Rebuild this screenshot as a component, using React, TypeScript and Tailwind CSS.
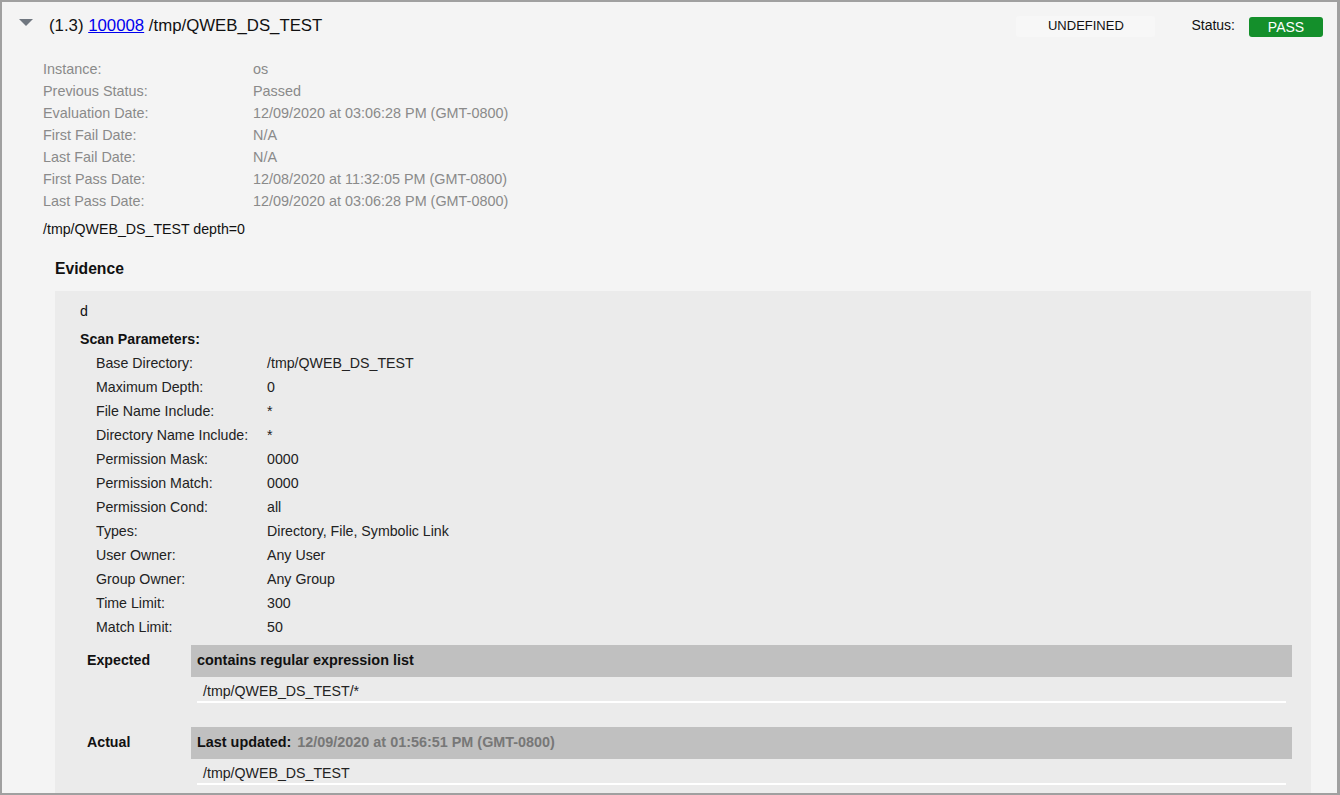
import React from "react";

const META: [string, string][] = [
  ["Instance:", "os"],
  ["Previous Status:", "Passed"],
  ["Evaluation Date:", "12/09/2020 at 03:06:28 PM (GMT-0800)"],
  ["First Fail Date:", "N/A"],
  ["Last Fail Date:", "N/A"],
  ["First Pass Date:", "12/08/2020 at 11:32:05 PM (GMT-0800)"],
  ["Last Pass Date:", "12/09/2020 at 03:06:28 PM (GMT-0800)"],
];

const PARAMS: [string, string][] = [
  ["Base Directory:", "/tmp/QWEB_DS_TEST"],
  ["Maximum Depth:", "0"],
  ["File Name Include:", "*"],
  ["Directory Name Include:", "*"],
  ["Permission Mask:", "0000"],
  ["Permission Match:", "0000"],
  ["Permission Cond:", "all"],
  ["Types:", "Directory, File, Symbolic Link"],
  ["User Owner:", "Any User"],
  ["Group Owner:", "Any Group"],
  ["Time Limit:", "300"],
  ["Match Limit:", "50"],
];

function ResultRow({
  label,
  header,
  value,
}: {
  label: string;
  header: React.ReactNode;
  value: string;
}) {
  return (
    <div className="flex">
      <div className="flex h-[32px] w-[136px] shrink-0 items-center pl-[32px] text-[14.2px] font-bold text-[#111]">
        {label}
      </div>
      <div className="mr-[19px] flex-1">
        <div className="flex h-[32px] items-center bg-[#c0c0c0] px-[6px] text-[14.4px] font-bold text-[#111]">
          {header}
        </div>
        <div className="mx-[6px] border-b-2 border-white pt-[4px] pl-[6px] text-[14.2px] leading-[20px] text-[#222]">
          {value}
        </div>
      </div>
    </div>
  );
}

export default function App() {
  return (
    <div className="h-[795px] w-[1340px] overflow-hidden border-t-2 border-r-[3px] border-b-2 border-l-2 border-[#a0a0a0] bg-[#f4f4f4] font-['Liberation_Sans',Arial,sans-serif]">
      {/* Header */}
      <div className="flex h-[48px] items-center pr-[14px]">
        <svg width="14" height="8" viewBox="0 0 14 8" className="mt-[-6px] ml-[17px]">
          <polygon points="0,0 14,0 7,7" fill="#707780" />
        </svg>
        <div className="ml-[16px] text-[16.8px] text-[#111]">
          (1.3){" "}
          <a href="#" className="text-[#0000ee] underline">
            100008
          </a>{" "}
          /tmp/QWEB_DS_TEST
        </div>
        <div className="ml-auto flex h-[21px] w-[139px] items-center justify-center rounded-[3px] bg-[#f7f7f7] text-[13px] text-[#111]">
          UNDEFINED
        </div>
        <div className="ml-[36px] mt-[-2px] text-[14px] text-[#111]">Status:</div>
        <div className="ml-[14px] mt-[2px] flex h-[20px] w-[74px] items-center justify-center rounded-[3px] bg-[#148f2b] text-[14px] text-white">
          PASS
        </div>
      </div>

      {/* Meta */}
      <div className="mt-[8px] pl-[41px]">
        {META.map(([k, v]) => (
          <div key={k} className="flex text-[14.4px] leading-[22px] text-[#8a8a8a]">
            <div className="w-[210px] shrink-0">{k}</div>
            <div>{v}</div>
          </div>
        ))}
        <div className="mt-[6px] text-[14.2px] leading-[22px] text-[#111]">
          /tmp/QWEB_DS_TEST depth=0
        </div>
      </div>

      {/* Evidence */}
      <div className="mt-[18px] pl-[53px] text-[15.7px] leading-[22px] font-bold text-[#111]">
        Evidence
      </div>
      <div className="mt-[11px] mr-[26px] ml-[53px] bg-[#ebebeb] pt-[9px] pb-[20px]">
        <div className="pl-[25px] text-[14.2px] leading-[22px] text-[#111]">d</div>
        <div className="mt-[6px] pl-[25px] text-[14.2px] leading-[22px] font-bold text-[#111]">
          Scan Parameters:
        </div>
        <div className="mt-[1px] pl-[41px]">
          {PARAMS.map(([k, v]) => (
            <div key={k} className="flex text-[14.2px] leading-[24px] text-[#222]">
              <div className="w-[171px] shrink-0">{k}</div>
              <div>{v}</div>
            </div>
          ))}
        </div>
        <div className="mt-[6px]">
          <ResultRow
            label="Expected"
            header="contains regular expression list"
            value="/tmp/QWEB_DS_TEST/*"
          />
        </div>
        <div className="mt-[24px]">
          <ResultRow
            label="Actual"
            header={
              <span>
                Last updated:{" "}
                <span className="ml-[2px] text-[#777]">
                  12/09/2020 at 01:56:51 PM (GMT-0800)
                </span>
              </span>
            }
            value="/tmp/QWEB_DS_TEST"
          />
        </div>
      </div>
    </div>
  );
}
